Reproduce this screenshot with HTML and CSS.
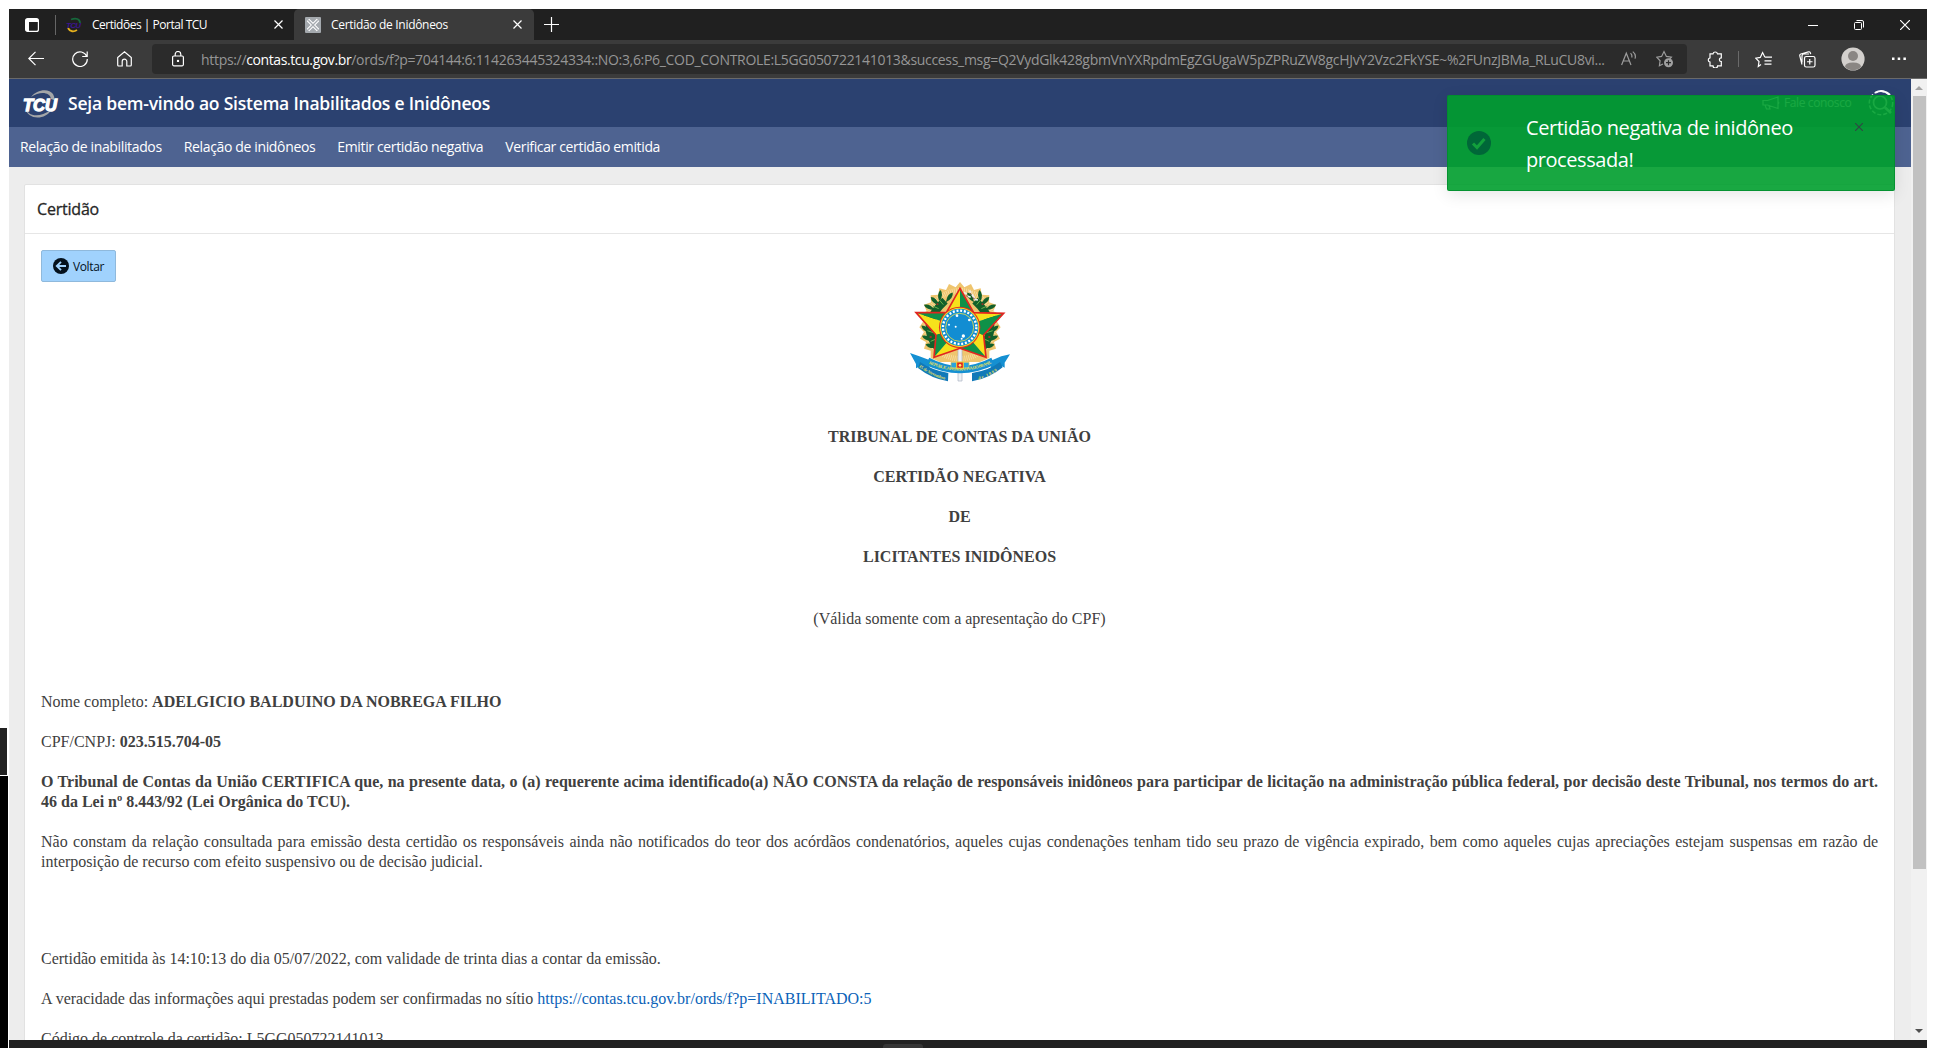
FILE: index.html
```html
<!DOCTYPE html>
<html lang="pt-BR">
<head>
<meta charset="utf-8">
<title>Certidão de Inidôneos</title>
<link rel="stylesheet" href="styles.css">
</head>
<body>
<div class="desktop">
  <div class="edge"><div class="edge-panel"></div><div class="edge-black"></div></div>
  <div class="window">
    <div class="tabstrip">
      <svg class="tab-actions" width="14" height="14" viewBox="0 0 14 14"><rect x=".6" y=".6" width="12.8" height="12.8" rx="2" fill="none" stroke="#fff" stroke-width="1.2"/><path d="M1 1h12v3H1zM1 3h3v10H1z" fill="#fff"/></svg>
      <div class="tab-divider"></div>
      <div class="tab">
        <svg width="16" height="16" viewBox="0 0 16 16"><path d="M5 2.5C10 .5 14 2 14 6" fill="none" stroke="#17683c" stroke-width="1.8"/><path d="M2 11c2 4 6 4 9 2" fill="none" stroke="#e5b01d" stroke-width="1.8"/><text class="fav-text" x="0" y="10.5" textLength="15">TCU</text></svg>
        <span class="tab-title first">Certidões | Portal TCU</span>
        <svg width="9" height="9" viewBox="0 0 9 9"><path d="M.5.5l8 8M8.500.5l-8 8" stroke="#fff" stroke-width="1.2"/></svg>
      </div>
      <div class="tab active">
        <svg width="16" height="16" viewBox="0 0 16 16"><rect width="16" height="16" rx="1" fill="#a4a9ae"/><path d="M3 3l10 10M13 3L3 13" stroke="#fff" stroke-width="3.4"/><path d="M3.300 3.300l9.400 9.400M12.700 3.300l-9.400 9.400" stroke="#a4a9ae" stroke-width="1.300"/></svg>
        <span class="tab-title second">Certidão de Inidôneos</span>
        <svg width="9" height="9" viewBox="0 0 9 9"><path d="M.5.5l8 8M8.500.5l-8 8" stroke="#fff" stroke-width="1.2"/></svg>
      </div>
      <svg class="new-tab" width="15" height="15" viewBox="0 0 15 15"><path d="M7.500 0v15M0 7.500h15" stroke="#fff" stroke-width="1.2"/></svg>
      <div class="controls">
        <svg width="10" height="10" viewBox="0 0 10 10"><path d="M0 5.500h10" stroke="#fff"/></svg>
        <svg width="10" height="10" viewBox="0 0 10 10" fill="none" stroke="#fff"><rect x=".5" y="2.500" width="7" height="7" rx="1"/><path d="M2.500.5H8A1.500 1.500 0 0 1 9.500 2v5.500"/></svg>
        <svg width="10" height="10" viewBox="0 0 10 10"><path d="M0 0l10 10M10 0L0 10" stroke="#fff" stroke-width="1.200"/></svg>
      </div>
    </div>
    <div class="toolbar">
      <span class="tool"><svg width="16" height="16" viewBox="0 0 16 16"><path d="M16 7.500H.8M7.500.8L.8 7.500l6.700 6.700"/></svg></span>
      <span class="tool"><svg width="16" height="16" viewBox="0 0 16 16"><path d="M14.800 5.500A7.300 7.300 0 1 0 15.300 8M15.200.5v5h-5"/></svg></span>
      <span class="tool"><svg width="15" height="16" viewBox="0 0 15 16"><path d="M.7 6.500L7.500.8l6.800 5.700v7.500a1 1 0 0 1-1 1H9.800v-4.500a2.300 2.300 0 0 0-4.600 0V15H1.700a1 1 0 0 1-1-1z"/></svg></span>
      <div class="omnibox">
        <svg class="lock" width="12" height="16" viewBox="0 0 12 16"><rect x=".6" y="5" width="10.800" height="9.800" rx="1.200"/><path d="M3.200 5V3.300a2.800 2.800 0 0 1 5.600 0V5"/><circle cx="6" cy="9.900" r=".6"/></svg>
        <span class="url">https://<b>contas.tcu.gov.br</b>/ords/f?p=704144:6:114263445324334::NO:3,6:P6_COD_CONTROLE:L5GG050722141013&amp;success_msg=Q2VydGlk428gbmVnYXRpdmEgZGUgaW5pZPRuZW8gcHJvY2Vzc2FkYSE~%2FUnzJBMa_RLuCU8vi...</span>
        <svg class="read" width="16" height="16" viewBox="0 0 16 16"><path d="M.6 14L5.300 2.200 10 14M2.200 10h6.200M9.500 2.200q2 1.600 1.200 4.300M11.800.6q3.600 2.800 2.200 7"/></svg>
        <svg class="read" width="18" height="18" viewBox="0 0 18 18"><path d="M7 14l-3.600 1.800.7-5L.7 7.200l4.900-.8L8 1.600l2.400 4.800 5 .8-1.800 1.900"/><circle cx="12.500" cy="12.700" r="4.500" fill="#a0a0a0" stroke="none"/><path d="M10 12.700h5M12.500 10.200v5" stroke="#2b2b2b"/></svg>
      </div>
      <span class="tool puzzle"><svg width="16" height="17" viewBox="0 0 16 17"><path d="M3 2.800h3a2.300 2.300 0 0 1 4.500 0h3.800v4a1.800 1.800 0 0 0 0 3.800v4.200h-3.700a2.300 2.300 0 0 1-4.600 0H3v-3.700a2.200 2.200 0 0 1 0-4.300z"/></svg></span>
      <div class="tool-divider"></div>
      <span class="tool favs"><svg width="17" height="17" viewBox="0 0 17 17"><path d="M6 13.500l-2.700 2 .7-5L.7 7.200l4.600-.8L7.600 1.600l2.300 4.600M10 6.200h7M9.500 9.800h7M9.500 13.200h7"/></svg></span>
      <span class="tool coll"><svg width="17" height="17" viewBox="0 0 17 17"><rect x="5.500" y="5.500" width="10.500" height="10.500" rx="1.800"/><path d="M10.750 8v5.500M8 10.750h5.500M3 13.500L.8 4.800Q.5 3.500 1.800 3L9.500.8q1.300-.3 1.800 1l.4 1.400M3 11.500V5a2 2 0 0 1 2-2h5"/></svg></span>
      <svg class="avatar" width="24" height="24" viewBox="0 0 24 24"><circle cx="12" cy="12" r="11.600" fill="#d3d0cd"/><circle cx="12" cy="9" r="5" fill="#8a8683"/><path d="M4 20q0-4.500 8-4.500T20 20q-3.500 3.300-8 3.300T4 20z" fill="#8a8683"/></svg>
      <span class="tool dots"><svg width="14" height="4" viewBox="0 0 14 4"><path d="M0 .5h2.500v2.500H0zM5.700.5h2.500v2.500H5.700zM11.400.5h2.500v2.500h-2.500z" fill="#fff" stroke="none"/></svg></span>
    </div>
    <div class="viewport">
      <main class="page">
        <header class="header">
          <svg class="logo" width="38" height="32" viewBox="0 0 38 32"><path d="M9 9C15 1 27 0 31 6q2 3 1 6l-3-1C28 4 18 3 9 9z" fill="#a4a6a8"/><path d="M3 19c3 10 14 11 26 3-5 10-24 11-26-3z" fill="#a4a6a8"/><text x="1" y="22.500" textLength="34" lengthAdjust="spacingAndGlyphs">TCU</text></svg>
          <h1>Seja bem-vindo ao Sistema Inabilitados e Inidôneos</h1>
          <a class="contact"><svg width="18" height="14" viewBox="0 0 18 14"><path d="M1 4.500h4.500L16 1v11.500L5.500 9H1zM3 9l1.500 4H8l-1-3.300M16 5.500q1.500 1 0 2.500"/></svg>Fale conosco</a>
          <svg class="seek" width="26" height="26" viewBox="0 0 26 26"><circle cx="13" cy="13" r="11.700" stroke-width="1.500" stroke-dasharray="4 2"/><path d="M7.500 2.600A11.700 11.700 0 0 1 22 5" stroke-width="2"/><circle cx="12" cy="12.500" r="6.500" stroke-width="1.700"/><path d="M17 17.500l6 5.500" stroke-width="2.500"/></svg>
        </header>
        <nav class="nav"><a>Relação de inabilitados</a><a>Relação de inidôneos</a><a>Emitir certidão negativa</a><a>Verificar certidão emitida</a></nav>
        <section class="card">
          <h2>Certidão</h2>
          <div class="body">
            <button class="back"><svg width="16" height="16" viewBox="0 0 16 16"><circle cx="8" cy="8" r="8" fill="#04111d"/><path d="M13 8H4M8 3.800L3.800 8 8 12.200" fill="none" stroke="#a0d2fd" stroke-width="1.900"/></svg>Voltar</button>
            <svg class="emblem" width="102" height="102" viewBox="57 33 306 306">
              <defs>
                <path id="leaf" d="M0-18Q12-5 0 18Q-12-5 0-18z"/>
                <g id="branch">
                  <path d="M145 235Q85 165 165 92" fill="none" stroke="#12602b" stroke-width="24"/>
                  <use href="#leaf" transform="translate(178 82) rotate(35)"/><use href="#leaf" transform="translate(150 78) rotate(5)"/>
                  <use href="#leaf" transform="translate(135 94) rotate(-45)"/><use href="#leaf" transform="translate(118 112) rotate(-65)"/>
                  <use href="#leaf" transform="translate(112 148) rotate(-35)"/><use href="#leaf" transform="translate(108 178) rotate(-50)"/>
                  <use href="#leaf" transform="translate(112 205) rotate(-65)"/><use href="#leaf" transform="translate(124 228) rotate(-75)"/>
                  <use href="#leaf" transform="translate(136 175) rotate(30)"/><use href="#leaf" transform="translate(140 207) rotate(20)"/>
                  <path d="M148 90l12 14M128 108l18 8M112 150l14 12M112 182l18 6M122 214l14-6" stroke="#6cb04c" stroke-width="3"/>
                  <path d="M140 100h5v5h-5zM120 168h6v6h-6zM119 198h6v6h-6z" fill="#9e3128"/>
                </g>
                <path id="ribbonCurve" d="M116 281Q210 323 306 279"/>
                <path id="ribbonLeft" d="M86 290Q122 318 170 330"/>
                <path id="ribbonRight" d="M266 329Q304 318 336 292"/>
              </defs>
              <path class="sun" d="M210 36L223 52 243 42 252 60 272 55 275 74 298 76 297 97 318 104 310 124 332 134 319 152 332 172 318 186 330 206 312 216 318 236 298 242 298 264 270 276H150L122 264 122 242 102 236 108 216 90 206 102 186 88 172 101 152 88 134 110 124 102 104 123 97 122 76 145 74 148 55 168 60 177 42 197 52z"/>
              <circle class="glow" cx="210" cy="164" r="102"/>
              <use href="#branch" fill="#12602b"/><use href="#branch" fill="#12602b" transform="matrix(-1 0 0 1 420 0)"/>
              <path d="M222 67l8 5M232 78l10 4M245 72l8 12M252 88l12 2M238 62l6 6" stroke="#eee" stroke-width="5"/><path d="M228 76l6 6M247 82l7 5M240 70l5 4" stroke="#6b4a50" stroke-width="3"/>
              <path d="M204 235h12v98h-12z" fill="#eef1f4" stroke="#a9b3c2" stroke-width="2"/>
              <g fill="#f6e21b"><path d="M210 55L169 128 210 172zM78 128L138 195 210 172zM132 262L210 235V172zM288 262L281 195 210 172zM341 130L251 128 210 172z"/></g>
              <g fill="#0f9148"><path d="M210 55L251 128 210 172zM78 128L169 128 210 172zM132 262L138 195 210 172zM288 262L210 235V172zM341 130L281 195 210 172z"/></g>
              <path d="M210 55L251 128 341 130 281 195 288 262 210 235 132 262 138 195 78 128 169 128z" fill="none" stroke="#e1251f" stroke-width="5"/>
              <circle cx="209" cy="172" r="62" fill="#e32b22"/><circle cx="209" cy="172" r="59" fill="#f7df20"/><circle cx="209" cy="172" r="56" fill="#128dd2"/>
              <circle cx="209" cy="172" r="50" fill="none" stroke="#fff" stroke-width="7" stroke-dasharray="6 5.220"/>
              <circle cx="209" cy="172" r="42" fill="none" stroke="#e8e04a" stroke-width="2.500"/>
              <g fill="#fff"><circle cx="201" cy="137" r="4"/><circle cx="177" cy="164" r="3"/><circle cx="197" cy="170" r="3"/><circle cx="238" cy="150" r="4"/><circle cx="220" cy="198" r="5"/><circle cx="215" cy="206" r="3"/></g>
              <path d="M60 249l28 10 28 10 4 30-34-8-8 4 0-13zM360 253l-26 6-28 12-4 26 34-8 8 4v-15z" fill="#1590d2"/>
              <path d="M90 276Q125 300 175 309L174 334Q125 326 84 294zM330 276Q296 302 246 309L246 334Q298 326 338 292z" fill="#1179b8"/>
              <path d="M118 263Q210 312 304 263L314 284Q210 335 106 284z" fill="#1590d2"/>
              <path d="M183 277h54v18h-54z" fill="#2aa4de" stroke="#e8c04a" stroke-width="2"/><path d="M200 276h20v20h-20z" fill="#e1251f" stroke="#f3d32c" stroke-width="3"/><circle cx="210" cy="286" r="4" fill="#fff27a"/>
              <g class="motto"><text><textPath href="#ribbonCurve" textLength="196">REPUBLICA FEDERATIVA DO BRASIL</textPath></text><text><textPath href="#ribbonLeft" textLength="88">15 de Novembro</textPath></text><text><textPath href="#ribbonRight" textLength="62">de 1889</textPath></text></g>
            </svg>
            <div class="heading"><p>TRIBUNAL DE CONTAS DA UNIÃO</p><p>CERTIDÃO NEGATIVA</p><p>DE</p><p>LICITANTES INIDÔNEOS</p></div>
            <p class="validity">(Válida somente com a apresentação do CPF)</p>
            <div class="text">
              <p>Nome completo: <b>ADELGICIO BALDUINO DA NOBREGA FILHO</b></p>
              <p>CPF/CNPJ: <b>023.515.704-05</b></p>
              <p><b>O Tribunal de Contas da União CERTIFICA que, na presente data, o (a) requerente acima identificado(a) NÃO CONSTA da relação de responsáveis inidôneos para participar de licitação na administração pública federal, por decisão deste Tribunal, nos termos do art. 46 da Lei nº 8.443/92 (Lei Orgânica do TCU).</b></p>
              <p>Não constam da relação consultada para emissão desta certidão os responsáveis ainda não notificados do teor dos acórdãos condenatórios, aqueles cujas condenações tenham tido seu prazo de vigência expirado, bem como aqueles cujas apreciações estejam suspensas em razão de interposição de recurso com efeito suspensivo ou de decisão judicial.</p>
            </div>
            <div class="text issued">
              <p>Certidão emitida às 14:10:13 do dia 05/07/2022, com validade de trinta dias a contar da emissão.</p>
              <p>A veracidade das informações aqui prestadas podem ser confirmadas no sítio <a>https://contas.tcu.gov.br/ords/f?p=INABILITADO:5</a></p>
              <p>Código de controle da certidão: L5GG050722141013</p>
            </div>
          </div>
        </section>
        <div class="toast">
          <svg width="24" height="24" viewBox="0 0 24 24"><circle cx="12" cy="12" r="12" fill="#006738"/><path d="M6 12.500l4 4 7.500-8.500" fill="none" stroke="#12a03c" stroke-width="3"/></svg>
          <p>Certidão negativa de inidôneo processada!</p>
          <svg class="dismiss" width="8" height="8" viewBox="0 0 8 8"><path d="M0 0l8 8M8 0L0 8" stroke="#2f4a44" stroke-width="1.200"/></svg>
        </div>
      </main>
      <div class="scrollbar"><div class="arrow up"></div><div class="thumb"></div><div class="arrow down"></div></div>
    </div>
    <div class="taskbar"><div class="task"></div></div>
  </div>
</div>
</body>
</html>
```
FILE: styles.css
```css
* { box-sizing: border-box; }
body { margin: 0; background: #fff; font-family: "Open Sans", "Noto Sans", sans-serif; overflow: hidden; }
h1, h2, p { margin: 0; }
svg { display: block; flex: none; }
.desktop { display: flex; width: 1936px; height: 1048px; }
.edge { width: 9px; padding-top: 728px; flex: none; }
.edge-panel { width: 7px; height: 47px; background: #212121; margin-bottom: 1px; }
.edge-black { width: 8px; height: 272px; background: #000; }
.window { width: 1918px; padding-top: 9px; display: flex; flex-direction: column; }

.tabstrip { height: 31px; flex: none; background: #202020; display: flex; align-items: center; }
.tab-actions { margin-left: 16px; }
.tab-divider { width: 1px; height: 20px; background: #666; margin-left: 16px; }
.tab { display: flex; align-items: center; height: 31px; width: 238px; padding-left: 10px; color: #fff; font-size: 12px; }
.tab.active { background: #3b3b3b; border-radius: 5px 5px 0 0; width: 240px; padding-left: 11px; }
.tab-title { margin-left: 10px; width: 182px; white-space: nowrap; }
.first { letter-spacing: -.48px; }
.second { letter-spacing: -.31px; }
.new-tab { margin-left: 10px; }
.controls { display: flex; gap: 36px; margin-left: auto; margin-right: 17px; }
.fav-text { font: italic bold 8px "Liberation Sans", sans-serif; fill: #3c1591; }

.toolbar { height: 39px; flex: none; background: #3b3b3b; border-bottom: 1px solid #6a6a6a; display: flex; align-items: center; padding-left: 5px; }
.tool { width: 44px; display: flex; justify-content: center; }
.tool svg, .lock, .read { fill: none; stroke: #fff; stroke-width: 1.2; }
.omnibox { width: 1535px; height: 30px; margin-left: 6px; border-radius: 4px; background: #2b2b2b; display: flex; align-items: center; padding-left: 20px; flex: none; }
.url { margin-left: 17px; width: 1420px; flex: none; color: #969696; font-size: 14px; letter-spacing: -.313px; white-space: nowrap; }
.url b { font-weight: 400; color: #fff; letter-spacing: -.4px; }
.omnibox .read { stroke: #9c9c9c; margin-right: 19px; }
.omnibox .read:last-child { margin-right: 0; }
.tool.puzzle { margin-left: 6px; }
.tool-divider { width: 1px; height: 16px; background: #6a6a6a; margin-left: 1px; }
.tool.favs { width: 48px; }
.tool.coll { width: 40px; }
.avatar { margin: 0 10px 0 14px; }
.tool.dots { width: 48px; }

.viewport { height: 961px; display: flex; flex: none; overflow: hidden; }
.page { width: 1902px; background: #ededed; position: relative; }
.header { height: 48px; background: #2b4170; display: flex; align-items: center; color: #fff; padding-left: 13px; }
.logo { margin-top: 2px; }
.logo text { font: italic bold 17px "Liberation Sans", sans-serif; fill: #fff; stroke: #fff; stroke-width: 1.3; }
.header h1 { font-size: 17.5px; font-weight: 600; letter-spacing: -.21px; margin: 0 0 0 8px; line-height: 24px; }
.contact { margin-left: auto; display: flex; align-items: center; gap: 4px; font-size: 12px; letter-spacing: -.38px; width: 106px; padding-bottom: 1px; }
.contact svg, .seek { fill: none; stroke: #fff; stroke-width: 1.2; }
.seek { margin-right: 17px; margin-bottom: 1px; }
.nav { height: 40px; background: #4e6391; display: flex; align-items: center; gap: 22px; padding: 0 0 2px 11px; color: #fff; font-size: 14px; letter-spacing: -.355px; }

.card { margin: 17px 16px 0 15px; height: 1000px; background: #fff; border: 1px solid #e2e2e2; border-radius: 2px; }
.card h2 { height: 49px; border-bottom: 1px solid #e6e6e6; padding-left: 12px; font-size: 16px; line-height: 48px; font-weight: 500; letter-spacing: -.2px; color: #262626; -webkit-text-stroke: .3px #262626; }
.body { padding: 16px; font: 16px/20px "Liberation Serif", "Times New Roman", serif; color: #404040; }
.back { width: 75px; height: 32px; border: 1px solid #8fb9dc; border-radius: 2px; background: #a0d2fd; display: flex; align-items: center; justify-content: center; gap: 4px; padding: 0; font: 12px "Open Sans", sans-serif; letter-spacing: -.38px; color: #04111d; }
.emblem { margin: -1px auto 44px; }
.sun { fill: #efc56e; }
.glow { fill: none; stroke: #f8e2ae; stroke-width: 16px; stroke-dasharray: 2 4; }
.motto { font: bold 13px "Liberation Serif", serif; fill: #e6e05a; }
.heading { display: grid; gap: 20px; text-align: center; font-weight: 700; }
.validity { text-align: center; margin: 42px 0 63px; }
.text { display: grid; gap: 20px; text-align: justify; }
.issued { margin-top: 77px; }
.text a { color: #0b62b8; }

.toast { position: absolute; left: 1438px; top: 16px; width: 448px; height: 96px; border: 1px solid rgba(0, 140, 45, .8); border-radius: 2px; background: rgba(0, 158, 45, .9); box-shadow: 0 4px 16px rgba(0, 0, 0, .1); display: flex; align-items: center; padding-left: 19px; color: #fff; font-size: 20px; line-height: 32px; letter-spacing: -.44px; }
.toast p { width: 290px; margin-left: 35px; padding-top: 2px; }
.dismiss { margin: 0 0 32px 39px; }
.scrollbar { width: 16px; background: #f1f1f1; display: flex; flex-direction: column; align-items: center; padding: 7px 0; }
.arrow { border: 4px solid transparent; flex: none; }
.up { border-top: 0; border-bottom: 4px solid #a3a3a3; }
.down { border-bottom: 0; border-top: 4px solid #505050; margin-top: auto; }
.thumb { width: 13px; height: 773px; margin-top: 6px; margin-left: 1px; background: #c1c1c1; flex: none; }
.taskbar { height: 8px; background: #212121; padding: 4px 0 0 874px; }
.task { width: 40px; height: 4px; background: #353535; border-radius: 3px 3px 0 0; }
```
